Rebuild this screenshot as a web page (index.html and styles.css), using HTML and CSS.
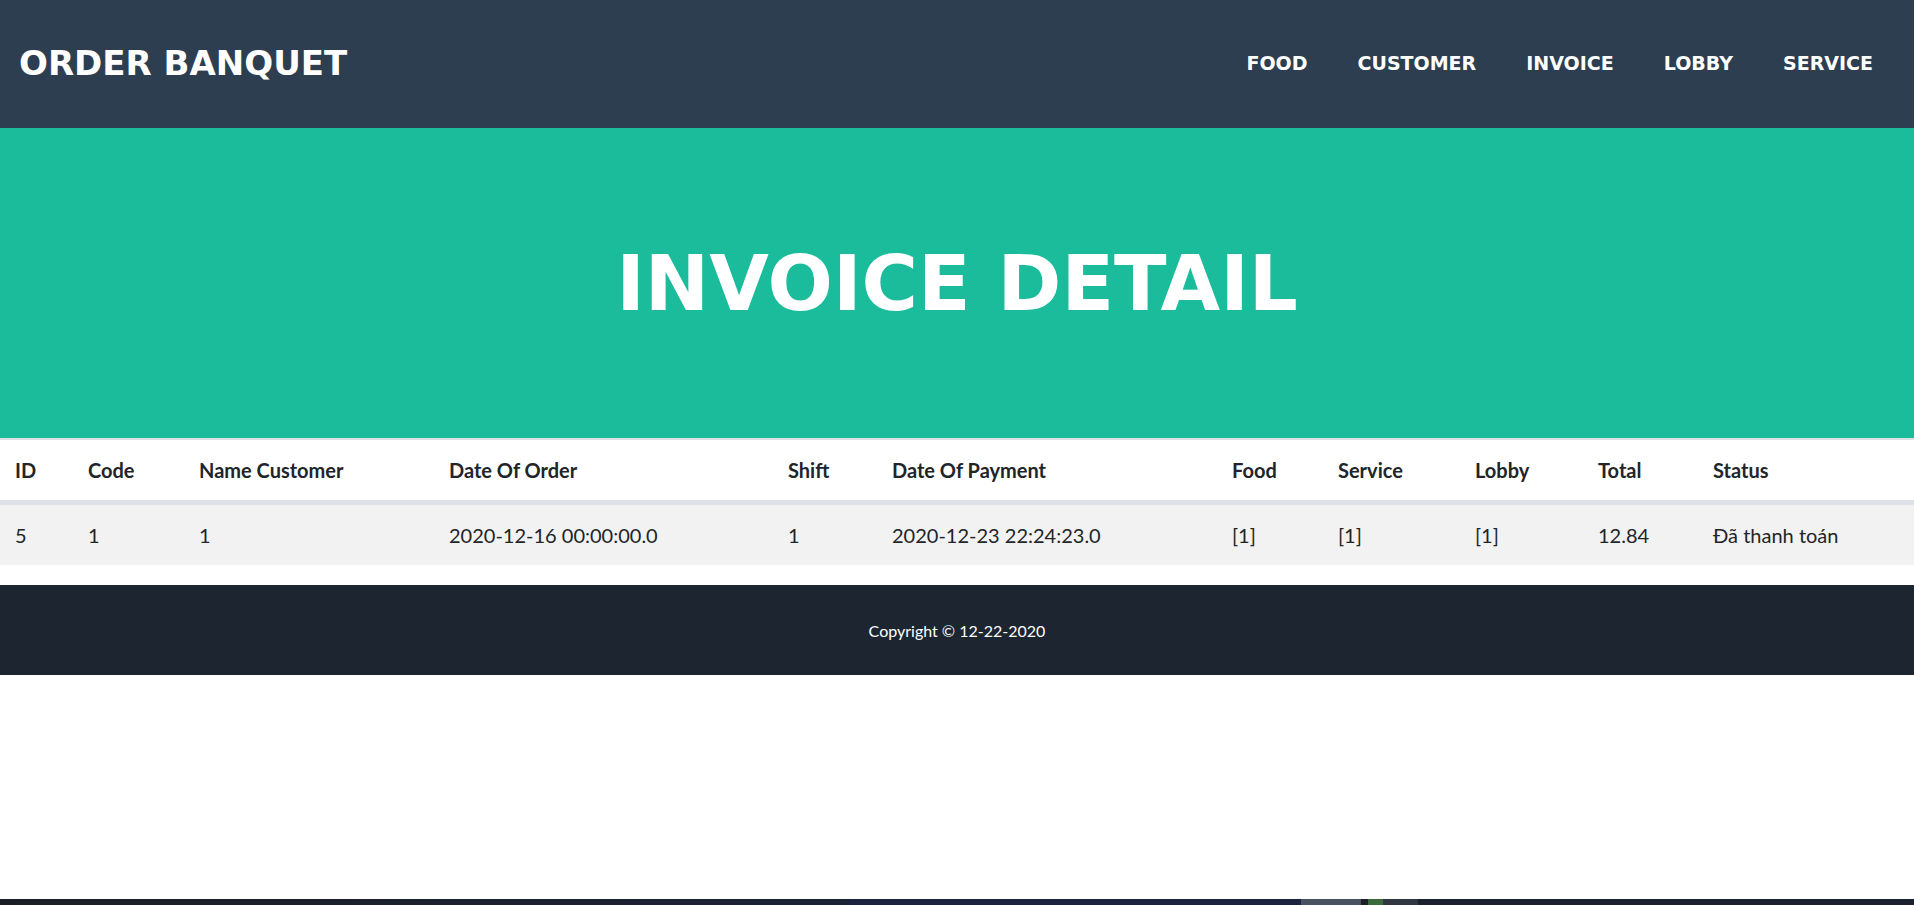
FILE: index.html
```html
<!DOCTYPE html>
<html lang="vi">
<head>
<meta charset="utf-8">
<title>Invoice Detail</title>
<link rel="stylesheet" href="styles.css">
</head>
<body>
<div class="page">
  <nav class="topnav">
    <a class="brand" href="#">ORDER BANQUET</a>
    <ul class="menu">
      <li><a href="#">FOOD</a></li>
      <li><a href="#">CUSTOMER</a></li>
      <li><a href="#">INVOICE</a></li>
      <li><a href="#">LOBBY</a></li>
      <li><a href="#">SERVICE</a></li>
    </ul>
  </nav>
  <header class="hero">
    <h1 class="hero-title">INVOICE DETAIL</h1>
  </header>
  <table class="invoice-table">
    <thead>
      <tr>
        <th class="c-id">ID</th>
        <th class="c-code">Code</th>
        <th class="c-name">Name Customer</th>
        <th class="c-order">Date Of Order</th>
        <th class="c-shift">Shift</th>
        <th class="c-pay">Date Of Payment</th>
        <th class="c-food">Food</th>
        <th class="c-service">Service</th>
        <th class="c-lobby">Lobby</th>
        <th class="c-total">Total</th>
        <th class="c-status">Status</th>
      </tr>
    </thead>
    <tbody>
      <tr>
        <td>5</td>
        <td>1</td>
        <td>1</td>
        <td>2020-12-16 00:00:00.0</td>
        <td>1</td>
        <td>2020-12-23 22:24:23.0</td>
        <td>[1]</td>
        <td>[1]</td>
        <td>[1]</td>
        <td>12.84</td>
        <td>Đã thanh toán</td>
      </tr>
    </tbody>
  </table>
  <footer class="copyright">
    <small>Copyright © 12-22-2020</small>
  </footer>
  <div class="spacer"></div>
  <div class="taskbar">
    <span class="tb-left"></span>
    <span class="tb-mid"></span>
    <span class="tb-item"></span>
    <span class="tb-sep"></span>
    <span class="tb-green"></span>
    <span class="tb-item2"></span>
    <span class="tb-rest"></span>
  </div>
</div>
</body>
</html>
```

FILE: styles.css
```css
html, body {
  margin: 0;
  padding: 0;
}

body {
  font-family: Lato, "Liberation Sans", sans-serif;
  color: #212529;
  background: #ffffff;
}

.page {
  min-height: 100vh;
  display: flex;
  flex-direction: column;
}

/* Navbar */
.topnav {
  height: 128px;
  background: #2c3e50;
  display: flex;
  align-items: center;
  justify-content: space-between;
  padding: 0 16px 2px 19px;
  box-sizing: border-box;
}

.brand {
  font-family: "DejaVu Sans", sans-serif;
  font-weight: 700;
  font-size: 34px;
  color: #ffffff;
  text-decoration: none;
}

.menu {
  list-style: none;
  display: flex;
  margin: 0;
  padding: 0;
}

.menu a {
  display: block;
  padding: 0 25px;
  font-family: "DejaVu Sans", sans-serif;
  font-weight: 700;
  font-size: 19px;
  color: #ffffff;
  text-decoration: none;
}

/* Hero */
.hero {
  height: 310px;
  background: #1abc9c;
  display: flex;
  align-items: center;
  justify-content: center;
}

.hero-title {
  margin: 0;
  font-family: "DejaVu Sans", sans-serif;
  font-weight: 700;
  font-size: 77px;
  color: #ffffff;
  line-height: 1;
}

/* Table */
.invoice-table {
  width: 100%;
  border-collapse: collapse;
  table-layout: fixed;
  font-size: 20px;
  line-height: 30px;
  border-top: 2px solid #dee2e6;
}

.invoice-table th,
.invoice-table td {
  box-sizing: border-box;
  text-align: left;
  padding: 15px;
  white-space: nowrap;
}

.invoice-table th {
  font-weight: 700;
  border-bottom: 5px solid #dee2e6;
}

.invoice-table tbody tr {
  background: #f2f2f2;
}

.c-id { width: 73px; }
.c-code { width: 111px; }
.c-name { width: 250px; }
.c-order { width: 339px; }
.c-shift { width: 104px; }
.c-pay { width: 340px; }
.c-food { width: 106px; }
.c-service { width: 137px; }
.c-lobby { width: 123px; }
.c-total { width: 115px; }
.c-status { width: 216px; }

/* Footer */
.copyright {
  margin-top: 20px;
  height: 90px;
  background: #1c2530;
  color: #ffffff;
  display: flex;
  align-items: center;
  justify-content: center;
}

.copyright small {
  font-size: 16px;
}

.spacer {
  flex: 1;
}

/* Bottom strip (OS taskbar edge) */
.taskbar {
  height: 6px;
  display: flex;
  background: #1b1f25;
}

.taskbar span {
  display: block;
  height: 100%;
}

.tb-left { width: 850px; background: linear-gradient(90deg, #1b1f25, #1b2236); }
.tb-mid { width: 451px; background: #1b2340; }
.tb-item { width: 60px; background: #4a5160; }
.tb-sep { width: 7px; background: #1c1f27; }
.tb-green { width: 15px; background: #3a6b3a; }
.tb-item2 { width: 35px; background: #30363f; }
.tb-rest { flex: 1; background: #1c2130; }
```
